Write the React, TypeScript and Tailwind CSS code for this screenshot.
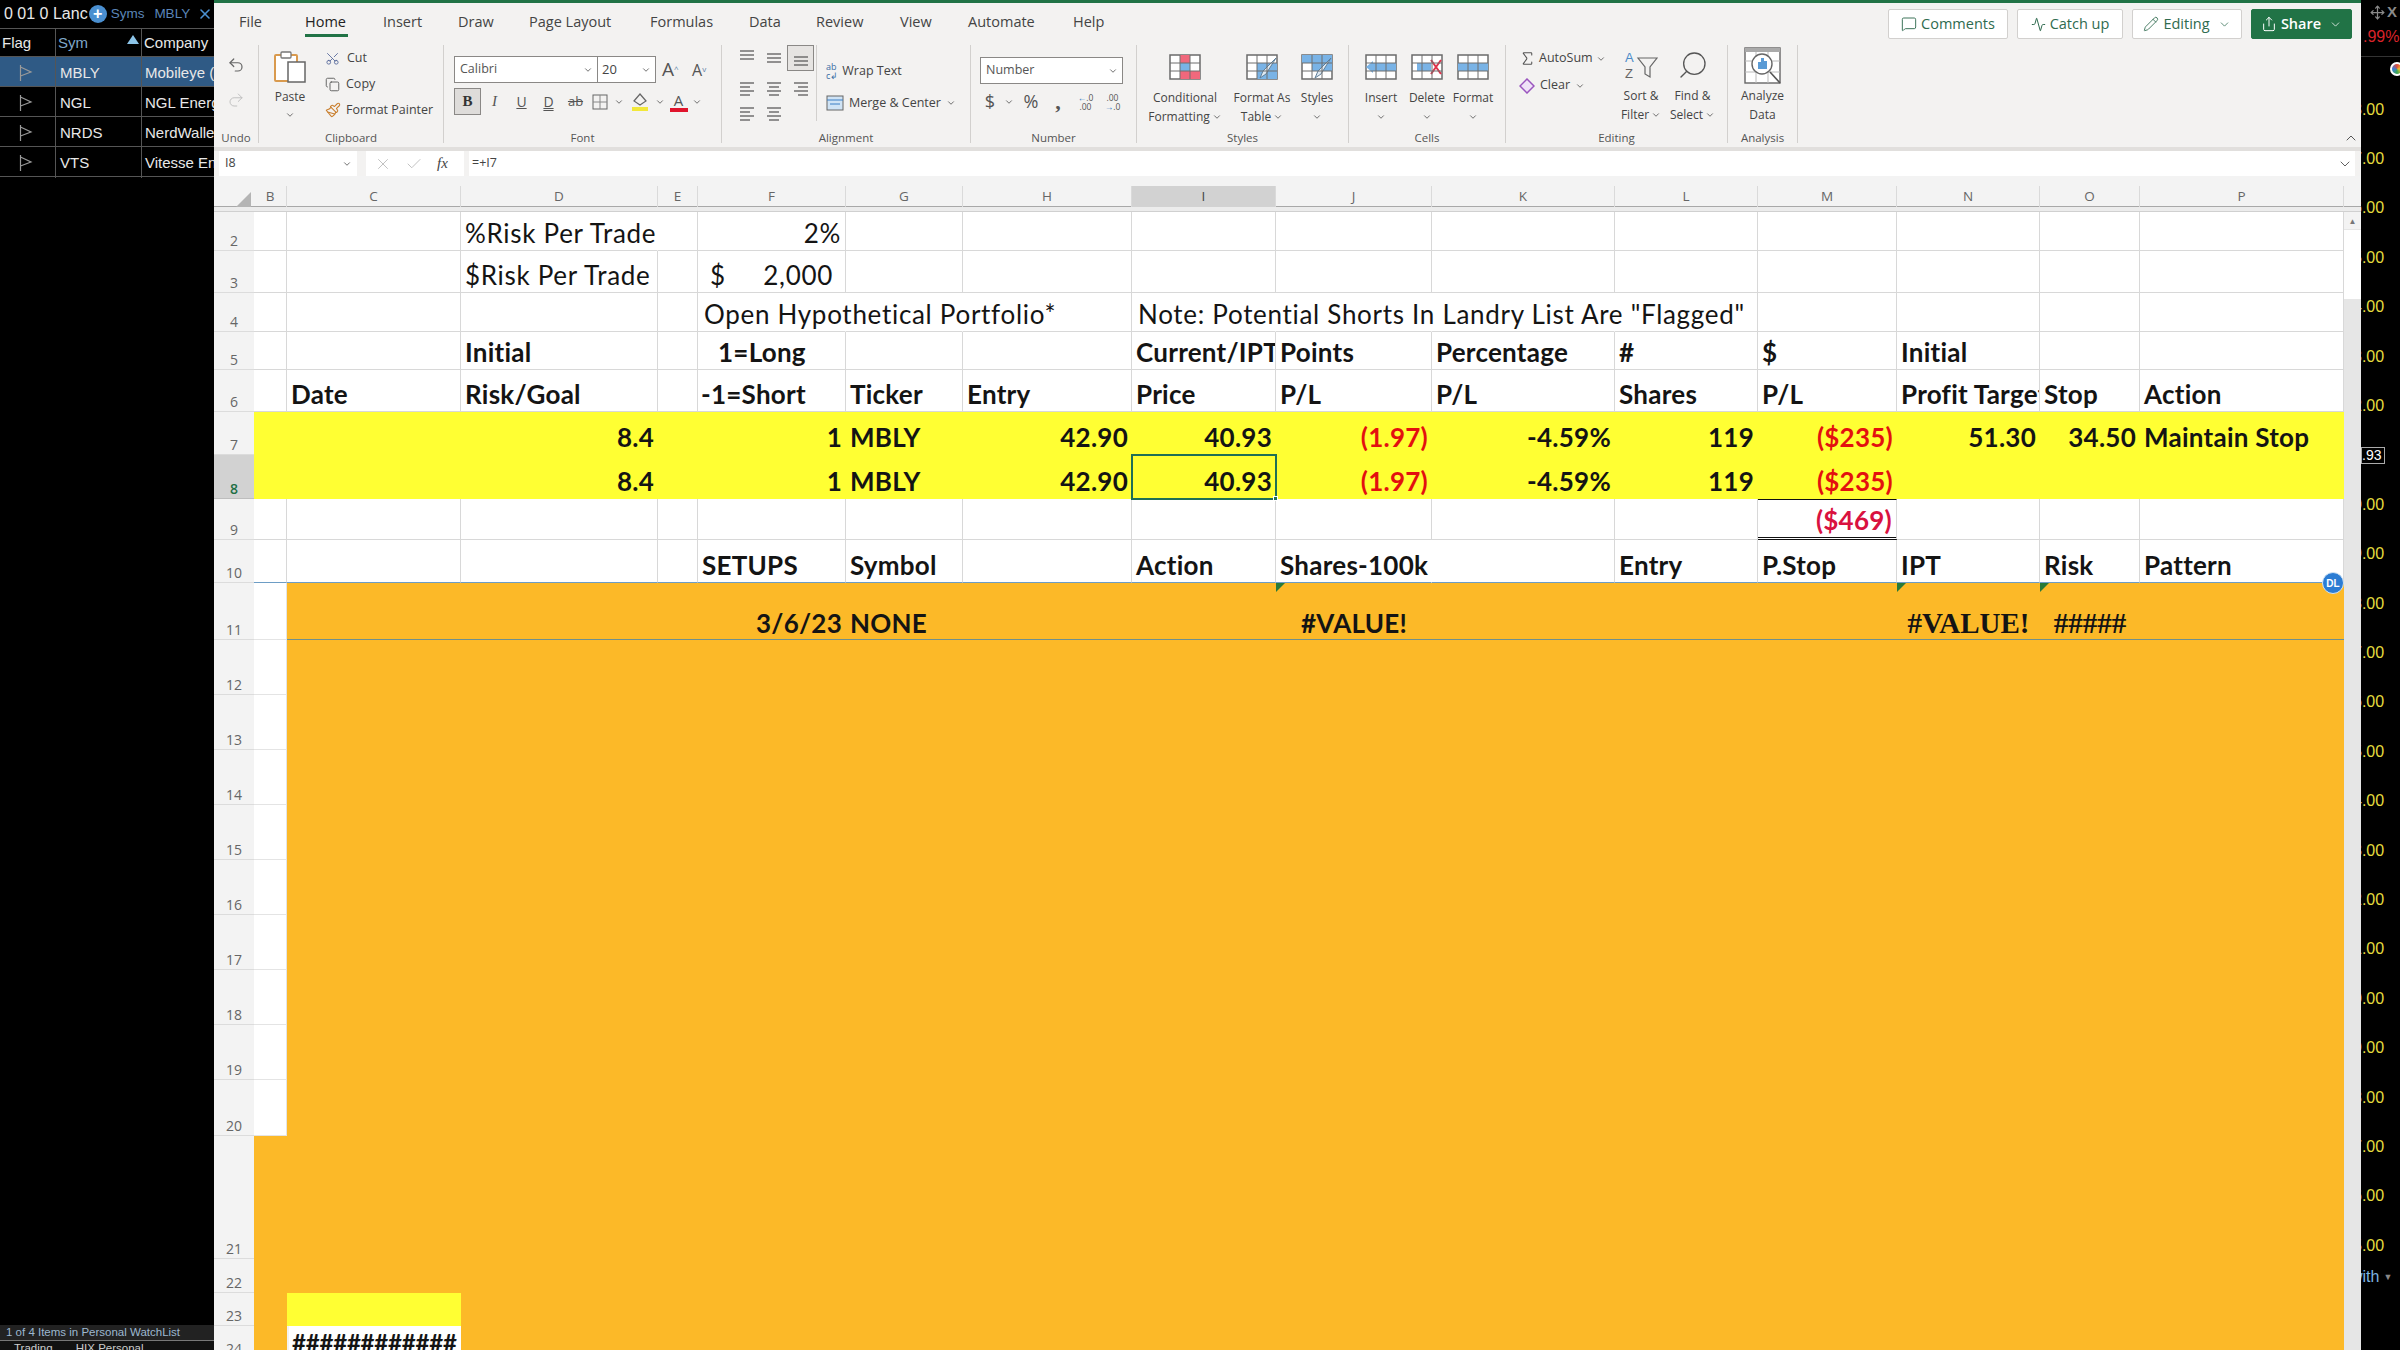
import React from "react";
import { Undo2, Redo2, Scissors, Copy, Paintbrush, ChevronDown, ChevronUp, X, Check, MessageSquare, Activity, Pencil, Share, Move, Search, Sigma } from "lucide-react";

const ROW_GRID = "grid grid-cols-[40px_33px_174px_197px_40px_148px_117px_169px_144px_156px_183px_143px_139px_143px_100px_204px]";
const UI = "font-['Open_Sans',sans-serif]";
const COLS = ["B","C","D","E","F","G","H","I","J","K","L","M","N","O","P"];

type C = { t?: React.ReactNode; r?: boolean; red?: string; pl?: string; pr?: string; nr?: boolean; clip?: boolean; center?: boolean; serif?: boolean; reg?: boolean; hash?: boolean; extra?: string; between?: boolean };

type RowDef = { n: number; h: string; cells: Record<string, C>; fill?: string; line?: string; sel?: boolean; bFill?: string };

const rows: RowDef[] = [
  { n: 2, h: "h-[39px]", cells: { D: { t: "%Risk Per Trade", nr: true, reg: true }, F: { t: "2%", r: true, reg: true } } },
  { n: 3, h: "h-[42px]", cells: { D: { t: "$Risk Per Trade", reg: true }, F: { t: <><span>$</span><span>2,000</span></>, between: true, reg: true } } },
  { n: 4, h: "h-[39px]", cells: { F: { t: "Open Hypothetical Portfolio*", nr: true, pl: "pl-[6px]", reg: true }, G: { nr: true }, I: { t: 'Note: Potential Shorts In Landry List Are "Flagged"', nr: true, pl: "pl-[6px]", reg: true }, J: { nr: true }, K: { nr: true } } },
  { n: 5, h: "h-[38px]", cells: { D: { t: "Initial" }, F: { t: "1=Long", pl: "pl-[20px]" }, I: { t: "Current/IPT", clip: true }, J: { t: "Points" }, K: { t: "Percentage" }, L: { t: "#" }, M: { t: "$" }, N: { t: "Initial" } } },
  { n: 6, h: "h-[42px]", cells: { C: { t: "Date" }, D: { t: "Risk/Goal" }, F: { t: "-1=Short", pl: "pl-[3px]" }, G: { t: "Ticker" }, H: { t: "Entry" }, I: { t: "Price" }, J: { t: "P/L" }, K: { t: "P/L" }, L: { t: "Shares" }, M: { t: "P/L" }, N: { t: "Profit Target", clip: true }, O: { t: "Stop" }, P: { t: "Action" } } },
  { n: 7, h: "h-[43px]", fill: "bg-[#ffff33]", cells: { D: { t: "8.4", r: true }, F: { t: "1", r: true }, G: { t: "MBLY" }, H: { t: "42.90", r: true }, I: { t: "40.93", r: true }, J: { t: "(1.97)", r: true, red: "text-[#e3100f]" }, K: { t: "-4.59%", r: true }, L: { t: "119", r: true }, M: { t: "($235)", r: true, red: "text-[#e3100f]" }, N: { t: "51.30", r: true }, O: { t: "34.50", r: true }, P: { t: "Maintain Stop" } } },
  { n: 8, h: "h-[44px]", fill: "bg-[#ffff33]", sel: true, cells: { D: { t: "8.4", r: true }, F: { t: "1", r: true }, G: { t: "MBLY" }, H: { t: "42.90", r: true }, I: { t: "40.93", r: true }, J: { t: "(1.97)", r: true, red: "text-[#e3100f]" }, K: { t: "-4.59%", r: true }, L: { t: "119", r: true }, M: { t: "($235)", r: true, red: "text-[#e3100f]" } } },
  { n: 9, h: "h-[41px]", cells: { M: { t: "($469)", r: true, red: "text-[#d9123f]", extra: "bg-white border-r border-r-[#d8d8d8] border-t border-t-[#111] border-b-[3px] border-double border-b-[#111]" } } },
  { n: 10, h: "h-[43px]", line: "border-b-[#6d9dc5]", cells: { F: { t: "SETUPS" }, G: { t: "Symbol" }, I: { t: "Action" }, J: { t: "Shares-100k", nr: true }, K: {}, L: { t: "Entry" }, M: { t: "P.Stop" }, N: { t: "IPT" }, O: { t: "Risk" }, P: { t: "Pattern" } } },
  { n: 11, h: "h-[57px]", fill: "bg-[#fcb928]", bFill: "bg-white", line: "border-b-[#6f8f8c]", cells: { F: { t: "3/6/23", r: true }, G: { t: "NONE" }, J: { t: "#VALUE!", center: true }, N: { t: "#VALUE!", center: true, serif: true }, O: { t: "#####", center: true, serif: true } } },
];

const fillerRows: RowDef[] = [12, 13, 14, 15, 16, 17, 18, 19].map((n) => ({ n, h: "h-[55px]", fill: "bg-[#fcb928]", bFill: "bg-white", cells: {} }));
const allRows: RowDef[] = [
  ...rows,
  ...fillerRows,
  { n: 20, h: "h-[56px]", fill: "bg-[#fcb928]", bFill: "bg-white", cells: {} },
  { n: 21, h: "h-[123px]", fill: "bg-[#fcb928]", cells: {} },
  { n: 22, h: "h-[34px]", fill: "bg-[#fcb928]", cells: {} },
  { n: 23, h: "h-[33px]", fill: "bg-[#fcb928]", cells: { C: { extra: "bg-[#ffff33]" } } },
  { n: 24, h: "h-[30px]", fill: "bg-[#fcb928]", cells: { C: { t: "############", hash: true, extra: "bg-white ml-[2px]", pl: "pl-[3px]" } } },
];

function Cell({ col, c, row }: { col: string; c?: C; row: RowDef }) {
  const filled = !!row.fill;
  const isB = col === "B" && row.bFill;
  const sel = row.sel && col === "I";
  const fontCls = c?.serif
    ? "font-['Liberation_Serif',serif] text-[29px] font-bold"
    : c?.hash
      ? "font-['Lato',sans-serif] text-[24px] font-bold tracking-[-0.2px]"
      : c?.reg
        ? "font-['Lato',sans-serif] text-[26px] tracking-[0.7px]"
        : "font-['Lato',sans-serif] text-[26px] font-bold tracking-[0.25px]";
  const surface = c?.extra
    ? c.extra
    : isB
      ? "bg-white border-b border-r border-[#e4e4e4]"
      : filled
        ? row.line
          ? `${row.fill} border-b ${row.line}`
          : `${row.fill}`
        : `bg-white border-r border-b ${c?.nr ? "border-r-transparent" : "border-r-[#d8d8d8]"} ${row.line ?? "border-b-[#d8d8d8]"}`;
  const lead = row.n === 7 || row.n === 8 ? "leading-[35px]" : row.n === 11 ? "leading-[32px]" : "leading-[33px]";
  const cls = [
    "relative flex items-end whitespace-nowrap text-[#141414]",
    lead,
    fontCls,
    surface,
    c?.r ? "justify-end" : "",
    c?.center ? "justify-center" : "",
    c?.between ? "justify-between px-3" : "",
    c?.r ? c?.pr ?? "pr-[4px]" : "",
    !c?.r && !c?.center && !c?.between ? c?.pl ?? "pl-[4px]" : "",
    c?.clip ? "overflow-hidden" : "",
    c?.red ?? "",
    sel ? "z-10 outline-2 -outline-offset-1 outline-[#1f6f55]" : "",
  ].join(" ");
  return (
    <div className={cls}>
      {c?.between ? c.t : c?.t ? <span className="relative z-[1]">{c.t}</span> : null}
      {sel && <span className="absolute -right-[2px] -bottom-[2px] h-[5px] w-[5px] border border-white bg-[#1f6f55]" />}
      {row.n === 11 && (col === "J" || col === "N" || col === "O") && (
        <span className="absolute left-0 top-0 h-[9px] w-[9px] bg-[#2a7a38] [clip-path:polygon(0_0,100%_0,0_100%)]" />
      )}
    </div>
  );
}

function SheetRow({ row }: { row: RowDef }) {
  return (
    <div className={`${ROW_GRID} ${row.h}`}>
      <div className={`${UI} flex items-end justify-center border-b text-[14px] leading-[18px] ${row.sel ? "bg-[#d2d2d2] border-[#bdbdbd] font-semibold text-[#1f6f45]" : "bg-[#f3f3f3] border-[#dcdcdc] text-[#666]"}`}>
        {row.n}
      </div>
      {COLS.map((col) => (
        <Cell key={col} col={col} c={row.cells[col]} row={row} />
      ))}
    </div>
  );
}

function ColHeader() {
  return (
    <div className={`${ROW_GRID} h-[21px] ${UI} border-b border-[#a8a8a8] bg-[#f3f3f3] text-[13.5px] leading-[21px] text-[#666]`}>
      <div className="flex items-end justify-end pr-[2px]">
        <svg width="18" height="17" viewBox="0 0 18 17"><polygon points="17,0 17,17 0,17" fill="#b4b4b4" /></svg>
      </div>
      {COLS.map((c) => (
        <div key={c} className={`text-center border-r border-[#dadada] ${c === "I" ? "bg-[#d2d2d2] border-b-2 border-b-[#1f6f45] text-[#444]" : ""}`}>{c}</div>
      ))}
    </div>
  );
}

function Caret({ className = "" }: { className?: string }) {
  return <ChevronDown size={10} strokeWidth={2} className={`shrink-0 text-[#555] ${className}`} />;
}

function Group({ w, label, children }: { w: string; label: string; children: React.ReactNode }) {
  return (
    <div className={`flex h-[98px] flex-col border-r border-[#d2d0ce] ${w}`}>
      <div className="flex h-[78px]">{children}</div>
      <div className="h-[20px] text-center text-[11.5px] leading-[30px] text-[#555]">{label}</div>
    </div>
  );
}

function Tab({ w, label, active }: { w: string; label: string; active?: boolean }) {
  return (
    <div className={`${w} relative text-[14.5px] leading-[38px] ${active ? "text-[#222] font-medium" : "text-[#444]"}`}>
      {label}
      {active && <span className="absolute left-0 top-[31px] h-[3px] w-[43px] bg-[#217346]" />}
    </div>
  );
}

function TopBtn({ w, children, green }: { w: string; children: React.ReactNode; green?: boolean }) {
  return (
    <div className={`${w} flex h-[30px] items-center justify-center gap-1 rounded-[2px] border text-[14.5px] ${green ? "border-[#217346] bg-[#217346] font-semibold text-white" : "border-[#d2d0ce] bg-white text-[#2f6b4f]"}`}>
      {children}
    </div>
  );
}

function AlignIcon({ kind }: { kind: number }) {
  const sets: Record<number, number[][]> = {
    0: [[1, 15, 2], [1, 15, 6], [1, 15, 10]],
    1: [[1, 15, 5], [1, 15, 9], [1, 15, 13]],
    2: [[1, 15, 8], [1, 15, 12], [1, 15, 16]],
    3: [[1, 15, 3], [1, 11, 7], [1, 15, 11], [1, 11, 15]],
    4: [[1, 15, 3], [3, 13, 7], [1, 15, 11], [3, 13, 15]],
    5: [[1, 15, 3], [5, 15, 7], [1, 15, 11], [5, 15, 15]],
  };
  return (
    <svg width="16" height="18" viewBox="0 0 16 18">
      {sets[kind].map((l, i) => (
        <line key={i} x1={l[0]} x2={l[1]} y1={l[2]} y2={l[2]} stroke="#666" strokeWidth="1.4" />
      ))}
    </svg>
  );
}

function CellGrid({ children, w = 32, h = 26 }: { children?: React.ReactNode; w?: number; h?: number }) {
  return (
    <svg width={w} height={h} viewBox="0 0 32 26" fill="none">
      <rect x="1" y="1" width="30" height="24" fill="#fff" stroke="#6b6b6b" strokeWidth="1.5" />
      {children}
      <path d="M1 9H31M1 17H31M11 1V25M21 1V25" stroke="#6f6f6f" strokeWidth="1" />
    </svg>
  );
}

function LabelIcon({ w, label1, label2, icon, caret, small }: { w: string; label1: string; label2?: string; icon: React.ReactNode; caret?: boolean; small?: boolean }) {
  return (
    <div className={`${w} flex flex-col items-center text-[12px] leading-[19px] text-[#444] ${small ? "pt-[5px]" : "pt-[9px]"}`}>
      <div className={`flex items-center justify-center ${small ? "h-[30px]" : "h-[26px]"}`}>{icon}</div>
      <div className={`whitespace-nowrap ${small ? "mt-[6px]" : "mt-[8px]"}`}>{label1}</div>
      <div className="flex min-h-[19px] items-center gap-[2px] whitespace-nowrap">
        {label2}
        {caret && <Caret />}
      </div>
    </div>
  );
}

function Ribbon() {
  return (
    <div className="flex h-[98px] items-start">
      <Group w="w-[45px]" label="Undo">
        <div className="flex w-full flex-col items-center gap-[17px] pt-[11px] text-[#666]">
          <Undo2 size={18} strokeWidth={1.6} />
          <Redo2 size={18} strokeWidth={1.2} className="text-[#bbb]" />
        </div>
      </Group>
      <Group w="w-[185px]" label="Clipboard">
        <div className="flex w-[62px] flex-col items-center pt-[4px] text-[12px] text-[#444]">
          <svg width="34" height="34" viewBox="0 0 34 34" fill="none">
            <rect x="2" y="6" width="22" height="26" rx="1" fill="#fff" stroke="#d99a4e" strokeWidth="2" />
            <rect x="8" y="3" width="10" height="6" rx="1" fill="#fff" stroke="#777" strokeWidth="1.3" />
            <rect x="15" y="13" width="17" height="20" fill="#fff" stroke="#666" strokeWidth="1.5" />
          </svg>
          <div className="mt-[5px] leading-[18px]">Paste</div>
          <Caret className="mt-[4px]" />
        </div>
        <div className="flex flex-col pl-[4px] text-[12.5px] leading-[26px] text-[#444]">
          <div className="flex h-[27px] items-center gap-[7px]"><Scissors size={15} strokeWidth={1.4} className="-rotate-90 text-[#56689a]" />Cut</div>
          <div className="flex h-[27px] items-center gap-[6px]"><Copy size={15} strokeWidth={1.4} className="text-[#555]" />Copy</div>
          <div className="flex h-[27px] items-center gap-[5px]"><Paintbrush size={16} strokeWidth={1.6} className="text-[#c97f2e]" />Format Painter</div>
        </div>
      </Group>
      <Group w="w-[278px]" label="Font">
        <div className="flex flex-col pl-[10px] pt-[11px]">
          <div className="flex h-[27px] items-center">
            <div className="flex h-full w-[144px] items-center justify-between border border-[#8a8886] bg-white pl-[5px] pr-[4px] text-[12.5px] text-[#555]">Calibri<Caret /></div>
            <div className="flex h-full w-[58px] items-center justify-between border border-l-0 border-[#8a8886] bg-white pl-[4px] pr-[4px] text-[13px] text-[#444]">20<Caret /></div>
            <div className="w-[36px] pl-[6px] text-[19px] leading-none text-[#555]">A<sup className="text-[8px] text-[#5b7fa8]">^</sup></div>
            <div className="w-[24px] text-[16px] leading-none text-[#555]">A<sup className="text-[8px] text-[#5b7fa8]">v</sup></div>
          </div>
          <div className="mt-[5px] flex h-[27px] items-center text-[#555]">
            <div className="flex h-[27px] w-[27px] items-center justify-center border border-[#8a8886] bg-[#dedcda] font-['Liberation_Serif',serif] text-[15px] font-bold text-[#333]">B</div>
            <div className="flex w-[27px] justify-center font-['Liberation_Serif',serif] text-[15px] italic">I</div>
            <div className="flex w-[27px] justify-center text-[14px] underline">U</div>
            <div className="flex w-[27px] justify-center text-[14px] underline decoration-double">D</div>
            <div className="flex w-[27px] justify-center text-[13px] line-through">ab</div>
            <div className="flex w-[22px] justify-center">
              <svg width="16" height="16" viewBox="0 0 16 16" fill="none"><rect x="1" y="1" width="14" height="14" stroke="#666" /><path d="M8 1V15M1 8H15" stroke="#888" /></svg>
            </div>
            <div className="flex w-[16px] justify-center"><Caret /></div>
            <div className="flex w-[25px] justify-center">
              <svg width="18" height="20" viewBox="0 0 18 20" fill="none"><path d="M9 2L15 9L9 13L3 9Z" stroke="#666" strokeWidth="1.2" /><rect x="1" y="15" width="16" height="4" fill="#f2e83a" /></svg>
            </div>
            <div className="flex w-[15px] justify-center"><Caret /></div>
            <div className="flex w-[23px] flex-col items-center text-[15px] leading-[16px]">A<span className="h-[4px] w-[18px] bg-[#e0142c]" /></div>
            <div className="flex w-[14px] justify-center"><Caret /></div>
          </div>
        </div>
      </Group>
      <Group w="w-[249px]" label="Alignment">
        <div className="mb-[2px] grid w-[95px] grid-cols-[27px_27px_27px] grid-rows-[26px_36px_14px] items-center justify-items-center border-r border-[#d2d0ce] pl-[11px]">
          <AlignIcon kind={0} />
          <AlignIcon kind={1} />
          <div className="flex h-[26px] w-[27px] items-center justify-center border border-[#8a8886] bg-[#e6e4e2]"><AlignIcon kind={2} /></div>
          <AlignIcon kind={3} />
          <AlignIcon kind={4} />
          <AlignIcon kind={5} />
          <AlignIcon kind={3} />
          <AlignIcon kind={4} />
        </div>
        <div className="flex flex-col pl-[9px] pt-[14px] text-[12.5px] text-[#444]">
          <div className="flex h-[24px] items-center gap-[4px]"><span className="text-[9px] leading-[9px] text-[#3a6ea5]">ab<br />c↲</span>Wrap Text</div>
          <div className="mt-[8px] flex h-[24px] items-center gap-[5px]">
            <svg width="18" height="18" viewBox="0 0 18 18" fill="none"><rect x="1" y="2" width="16" height="14" fill="#cfe3f5" stroke="#666" /><path d="M1 6H17M4 10H14" stroke="#3a7fc4" /></svg>
            Merge &amp; Center<Caret />
          </div>
        </div>
      </Group>
      <Group w="w-[166px]" label="Number">
        <div className="flex flex-col pl-[9px] pt-[12px]">
          <div className="flex h-[27px] w-[143px] items-center justify-between border border-[#8a8886] bg-white pl-[5px] pr-[4px] text-[12.5px] text-[#555]">Number<Caret /></div>
          <div className="mt-[4px] flex h-[27px] items-center text-[#555]">
            <span className="w-[20px] text-center text-[18px]">$</span>
            <span className="flex w-[18px] justify-center"><Caret /></span>
            <span className="w-[26px] text-center text-[18px]">%</span>
            <span className="w-[28px] text-center font-['Liberation_Serif',serif] text-[22px] font-bold leading-[14px]">,</span>
            <span className="w-[27px] text-center text-[8.5px] leading-[9px]"><span className="text-[#3a7fc4]">←</span>.0<br />.00</span>
            <span className="w-[27px] text-center text-[8.5px] leading-[9px]">.00<br /><span className="text-[#3a7fc4]">→</span>.0</span>
          </div>
        </div>
      </Group>
      <Group w="w-[212px]" label="Styles">
        <LabelIcon w="w-[96px]" label1="Conditional" label2="Formatting" caret icon={<CellGrid><rect x="11" y="1" width="10" height="8" fill="#f0687c" /><rect x="11" y="9" width="10" height="8" fill="#79b3e6" /><rect x="11" y="17" width="20" height="8" fill="#f0687c" /></CellGrid>} />
        <LabelIcon w="w-[58px]" label1="Format As" label2="Table" caret icon={<CellGrid><rect x="11" y="9" width="20" height="16" fill="#79b3e6" /><path d="M30 4L20 20L14 24L17 17Z" fill="#dfe9f2" stroke="#5f7f99" /></CellGrid>} />
        <LabelIcon w="w-[52px]" label1="Styles" label2="" caret icon={<CellGrid><rect x="11" y="9" width="20" height="8" fill="#79b3e6" /><rect x="1" y="1" width="30" height="8" fill="#79b3e6" /><path d="M30 4L20 20L14 24L17 17Z" fill="#dfe9f2" stroke="#5f7f99" /></CellGrid>} />
      </Group>
      <Group w="w-[157px]" label="Cells">
        <div className="w-[9px]" />
        <LabelIcon w="w-[46px]" label1="Insert" caret icon={<CellGrid><rect x="6" y="9" width="25" height="8" fill="#79b3e6" /><path d="M1 13L8 7V19Z" fill="#79b3e6" /></CellGrid>} />
        <LabelIcon w="w-[46px]" label1="Delete" caret icon={<CellGrid><rect x="6" y="9" width="14" height="8" fill="#79b3e6" /><path d="M20 6L30 20M30 6L20 20" stroke="#e0344c" strokeWidth="2" /></CellGrid>} />
        <LabelIcon w="w-[46px]" label1="Format" caret icon={<CellGrid><rect x="11" y="9" width="10" height="8" fill="#79b3e6" /><rect x="1" y="9" width="30" height="8" fill="#79b3e6" /></CellGrid>} />
      </Group>
      <Group w="w-[222px]" label="Editing">
        <div className="flex w-[109px] flex-col pl-[13px] text-[12.5px] text-[#444]">
          <div className="flex h-[27px] items-center gap-[3px]"><Sigma size={17} strokeWidth={1.5} className="text-[#555]" />AutoSum<Caret /></div>
          <div className="flex h-[27px] items-center gap-[5px]">
            <svg width="16" height="16" viewBox="0 0 16 16" fill="none"><path d="M8 1L15 8L8 15L1 8Z" fill="#efe2f7" stroke="#9a55bf" strokeWidth="1.5" /></svg>
            Clear<Caret />
          </div>
        </div>
        <LabelIcon w="w-[52px]" small label1="Sort &" label2="Filter" caret icon={
          <svg width="34" height="30" viewBox="0 0 34 30" fill="none">
            <text x="1" y="12" fontSize="13" fill="#4a8bc9" fontFamily="Liberation Sans">A</text>
            <text x="1" y="28" fontSize="13" fill="#666" fontFamily="Liberation Sans">Z</text>
            <path d="M14 8H33L26 17V27L21 24V17Z" stroke="#666" strokeWidth="1.2" />
          </svg>} />
        <LabelIcon w="w-[51px]" small label1="Find &" label2="Select" caret icon={<Search size={32} strokeWidth={1} className="-scale-x-100 text-[#555]" />} />
      </Group>
      <Group w="w-[70px]" label="Analysis">
        <LabelIcon w="w-full" small label1="Analyze" label2="Data" icon={
          <svg width="37" height="37" viewBox="0 0 37 37" fill="none">
            <rect x="1" y="1" width="35" height="35" fill="#fff" stroke="#666" strokeWidth="1.4" />
            <rect x="1" y="1" width="35" height="4" fill="#aaa" />
            <path d="M1 14H36M1 25H36M12 5V36M24 5V36" stroke="#bbb" />
            <circle cx="18" cy="17" r="10" fill="#fff" stroke="#666" strokeWidth="1.4" />
            <rect x="14" y="15" width="3" height="7" fill="#5b9bd5" /><rect x="17" y="11" width="3" height="11" fill="#5b9bd5" /><rect x="20" y="14" width="3" height="8" fill="#5b9bd5" />
            <path d="M26 25L36 36" stroke="#555" strokeWidth="1.6" />
          </svg>} />
      </Group>
    </div>
  );
}

function Excel() {
  return (
    <div className={`${UI} flex h-[1350px] w-[2147px] flex-col bg-[#f3f2f1]`}>
      <div className="h-[3px] bg-[#217346]" />
      <div className="flex h-[42px] items-start pl-[25px]">
        <Tab w="w-[66px]" label="File" />
        <Tab w="w-[78px]" label="Home" active />
        <Tab w="w-[75px]" label="Insert" />
        <Tab w="w-[71px]" label="Draw" />
        <Tab w="w-[121px]" label="Page Layout" />
        <Tab w="w-[99px]" label="Formulas" />
        <Tab w="w-[67px]" label="Data" />
        <Tab w="w-[84px]" label="Review" />
        <Tab w="w-[68px]" label="View" />
        <Tab w="w-[105px]" label="Automate" />
        <Tab w="w-[60px]" label="Help" />
        <div className="ml-auto mt-[6px] flex gap-[9px] pr-[9px]">
          <TopBtn w="w-[120px]"><MessageSquare size={16} strokeWidth={1.4} />Comments</TopBtn>
          <TopBtn w="w-[106px]"><Activity size={15} strokeWidth={1.6} />Catch up</TopBtn>
          <TopBtn w="w-[110px]"><Pencil size={16} strokeWidth={1.3} />Editing<ChevronDown size={13} strokeWidth={1.4} className="ml-1" /></TopBtn>
          <TopBtn w="w-[101px]" green><Share size={16} strokeWidth={1.5} />Share<ChevronDown size={13} strokeWidth={1.4} className="ml-1" /></TopBtn>
        </div>
      </div>
      <div className="relative h-[102px]">
        <Ribbon />
        <ChevronUp size={16} strokeWidth={1.5} className="absolute right-[2px] top-[85px] text-[#555]" />
      </div>
      <div className="flex h-[29px] border-t-4 border-[#e1dfdd] bg-[#f3f2f1] pl-[5px] pr-[6px] text-[13px] text-[#444]">
        <div className="flex h-[25px] w-[138px] items-center justify-between bg-white pl-[6px] pr-[5px] text-[12.5px]">I8<Caret /></div>
        <div className="ml-[9px] flex h-[25px] w-[98px] items-center bg-white pl-[8px] text-[#bbb]">
          <X size={18} strokeWidth={1.2} />
          <Check size={18} strokeWidth={1.2} className="ml-[13px]" />
          <span className="ml-[14px] font-['Liberation_Serif',serif] text-[15px] italic text-[#444]">fx</span>
        </div>
        <div className="ml-[5px] flex h-[25px] flex-1 items-center justify-between bg-white pl-[3px] pr-[2px] text-[12.5px]">=+I7<ChevronDown size={16} strokeWidth={1.4} className="text-[#555]" /></div>
      </div>
      <div className="h-[10px] shrink-0 bg-[#f3f3f3]" />
      <ColHeader />
      <div className="h-[5px] shrink-0 border-b border-[#d0d0d0] bg-[#ececec]" />
      <div className="relative flex flex-1 overflow-hidden">
        <div className="w-[2130px]">
          {allRows.map((r) => (
            <SheetRow key={r.n} row={r} />
          ))}
        </div>
        <div className="flex w-[17px] flex-col bg-[#e6e6e6]">
          <div className="flex h-[17px] items-center justify-center bg-[#f3f3f3] text-[8px] text-[#777]">▲</div>
          <div className="mt-[1px] h-[69px] bg-white" />
        </div>
        <span className="absolute left-[2108px] top-[360px] z-20 flex h-[22px] w-[22px] items-center justify-center rounded-full border border-[#cfe3f5] bg-[#2b7cd3] font-['Liberation_Sans',sans-serif] text-[10px] font-bold text-white">DL</span>
      </div>
    </div>
  );
}

function FlagIcon() {
  return (
    <svg width="14" height="18" viewBox="0 0 14 18" fill="none" className="ml-[19px]">
      <path d="M1.5 1V17M1.5 3L12 8L1.5 12" stroke="#9a9a9a" strokeWidth="1.2" />
    </svg>
  );
}

function Left() {
  const list = [
    ["MBLY", "Mobileye (", true],
    ["NGL", "NGL Energ", false],
    ["NRDS", "NerdWalle", false],
    ["VTS", "Vitesse En", false],
  ] as const;
  return (
    <div className="flex h-[1350px] w-[214px] shrink-0 flex-col overflow-hidden bg-black font-['Liberation_Sans',sans-serif] text-[15px] text-[#e8e8e8]">
      <div className="flex h-[29px] items-center whitespace-nowrap border-b border-[#555] pl-[4px] text-[16px]">
        0 01 0 Lanc
        <span className="ml-[1px] flex h-[18px] w-[18px] items-center justify-center rounded-full bg-[#4a8fd0] text-[16px] font-bold leading-none text-white">+</span>
        <span className="ml-[4px] text-[13.5px] text-[#5b86b8]">Syms</span>
        <span className="ml-[10px] text-[13.5px] text-[#5b86b8]">MBLY</span>
        <X size={16} strokeWidth={2.4} className="ml-[7px] text-[#4a8fd0]" />
      </div>
      <div className="grid h-[28px] grid-cols-[55px_86px_73px] border-b border-[#555] leading-[27px]">
        <div className="pl-[2px]">Flag</div>
        <div className="relative border-l border-[#555] pl-[2px] text-[#7fa6c9]">Sym<span className="absolute right-[2px] top-[6px] h-0 w-0 border-x-[6px] border-b-[9px] border-x-transparent border-b-[#8cc4e8]" /></div>
        <div className="overflow-hidden whitespace-nowrap border-l border-[#555] pl-[2px]">Company</div>
      </div>
      {list.map(([s, c, a]) => (
        <div key={s} className={`grid h-[30px] grid-cols-[55px_86px_73px] items-center border-b border-[#555] leading-[31px] ${a ? "bg-[#2f5a85]" : ""}`}>
          <FlagIcon />
          <div className="border-l border-[#555] pl-[4px]">{s}</div>
          <div className="overflow-hidden whitespace-nowrap border-l border-[#555] pl-[3px]">{c}</div>
        </div>
      ))}
      <div className="flex-1" />
      <div className="h-[15px] whitespace-nowrap bg-[#222] pl-[6px] text-[11.5px] leading-[15px] text-[#9db8d0]">1 of 4 Items in Personal WatchList</div>
      <div className="h-[10px] overflow-hidden whitespace-nowrap border-t border-[#777] bg-[#111] pl-[14px] text-[11.5px] leading-[14px] text-[#ccc]">Trading <span className="ml-[20px]">HIX Personal</span></div>
    </div>
  );
}

function Right() {
  const vals = [58, 57, 56, 55, 54, 53, 52, 0, 50, 49, 48, 47, 46, 45, 44, 43, 42, 41, 40, 39, 38, 37, 36, 35];
  return (
    <div className="flex h-[1350px] w-[39px] shrink-0 flex-col overflow-hidden bg-black font-['Liberation_Sans',sans-serif] text-[16px] text-[#e5dc3e]">
      <div className="flex h-[25px] items-center gap-[2px] pl-[9px] text-[#8a8a8a]">
        <Move size={15} strokeWidth={2} />
        <span className="text-[15px] font-bold">X</span>
      </div>
      <div className="h-[32px] overflow-hidden whitespace-nowrap border-b border-[#333] pl-[2px] text-[16px] leading-[24px] text-[#d8232a]">.99%</div>
      <div className="flex h-[28px] justify-end pt-[5px]">
        <span className="mr-[-4px] h-[14px] w-[14px] rounded-full border-2 border-white bg-[conic-gradient(#e04a3a,#f2c230,#3aa655,#3b7dd8,#e04a3a)]" />
      </div>
      {vals.map((v, i) =>
        v === 0 ? (
          <div key={i} className="flex h-[49.4px] items-center">
            <span className="flex h-[17px] w-[24px] items-center border border-[#aaa] bg-black text-[14px] text-white">.93</span>
          </div>
        ) : (
          <div key={i} className="flex h-[49.4px] items-center whitespace-nowrap">
            <span className="-ml-[8px]">{v % 10}.00</span>
          </div>
        ),
      )}
      <div className="flex h-[14px] items-center whitespace-nowrap text-[#7db4e0]"><span className="-ml-[10px]">with</span><span className="ml-[4px] text-[9px] text-[#888]">▼</span></div>
    </div>
  );
}

export default function App() {
  return (
    <div className="flex h-[1350px] w-[2400px] overflow-hidden bg-black">
      <Left />
      <Excel />
      <Right />
    </div>
  );
}
